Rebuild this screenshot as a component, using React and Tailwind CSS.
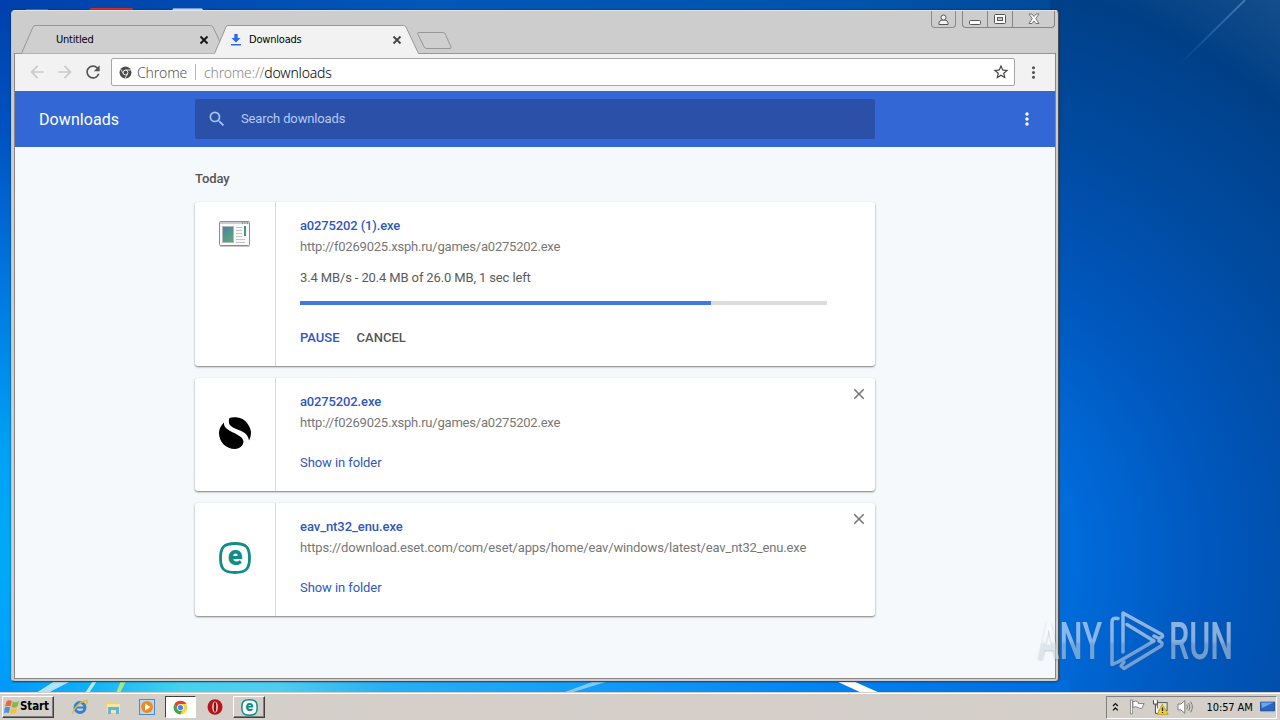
import React from 'react';
import { MdSearch, MdRefresh, MdStarBorder, MdMoreVert, MdClose, MdArrowBack, MdArrowForward } from 'react-icons/md';

const downloads = [
  {
    id: 1,
    name: 'a0275202 (1).exe',
    nameTracking: 'tracking-[-0.14px]',
    url: 'http://f0269025.xsph.ru/games/a0275202.exe',
    urlTracking: 'tracking-[-0.21px]',
    status: '3.4 MB/s - 20.4 MB of 26.0 MB, 1 sec left',
    percent: 78,
    icon: 'app',
  },
  {
    id: 2,
    name: 'a0275202.exe',
    nameTracking: 'tracking-[-0.14px]',
    url: 'http://f0269025.xsph.ru/games/a0275202.exe',
    urlTracking: 'tracking-[-0.21px]',
    icon: 'swirl',
  },
  {
    id: 3,
    name: 'eav_nt32_enu.exe',
    nameTracking: 'tracking-[-0.06px]',
    url: 'https://download.eset.com/com/eset/apps/home/eav/windows/latest/eav_nt32_enu.exe',
    urlTracking: 'tracking-[-0.135px]',
    icon: 'eset',
  },
];

const AppIcon = () => (
  <svg width="32" height="32" viewBox="0 0 32 32">
    <defs>
      <linearGradient id="appPic" x1="0" y1="0" x2="0.6" y2="1">
        <stop offset="0" stopColor="#4a80a8" />
        <stop offset="1" stopColor="#58a878" />
      </linearGradient>
    </defs>
    <rect x="0.5" y="3.5" width="30" height="24" rx="1" fill="#fafafa" stroke="#8b8b8b" />
    <rect x="1" y="4" width="29" height="2" fill="#c9ccd0" />
    <path d="M23 5h1M25.5 5h1M28 5h1" stroke="#555" />
    <rect x="3.5" y="8.500" width="11" height="16" fill="url(#appPic)" stroke="#b4b8bc" />
    <path d="M17 9.5h6M17 12.5h6M17 15.5h6M17 18.5h6M17 21.5h9M17 24.5h9" stroke="#c4c4c4" />
    <rect x="25" y="8" width="2" height="10" fill="#4f8d88" />
    <path d="M1 28.5h30" stroke="#c8c8c8" />
  </svg>
);

const SwirlIcon = () => (
  <svg width="32" height="32" viewBox="0 0 32 32">
    <path d="M10.5 1C13 0 16 0 19 .6C26 2 31 8 32 15C32 19 31 22 30 23.500C29 18 26 15.500 21 13.500C16 11.500 11 10 10 6C9.700 4 10 2 10.500 1Z" />
    <path d="M5 5.500C4.500 10 8 12.500 13 15C19 18 24 20 24.500 24.500C24.500 28 21 32 16 32C7 32 0 25 0 16C0 12 2 8 5 5.500Z" />
  </svg>
);

const EsetIcon = ({ size = 32 }) => (
  <svg width={size} height={size} viewBox="0 0 32 32">
    <path d="M16 1.500C27 1.500 30.500 5 30.500 16S27 30.500 16 30.500S1.500 27 1.500 16S5 1.500 16 1.500Z" fill="#fff" stroke="#0f8c8c" strokeWidth="2.800" />
    <text x="16" y="23" textAnchor="middle" fontFamily="Roboto" fontSize="27" fontWeight="900" fill="#0f8c8c">e</text>
  </svg>
);

const ChromeIcon = ({ size = 18 }) => (
  <svg width={size} height={size} viewBox="0 0 24 24">
    <circle cx="12" cy="12" r="11" fill="#fbd13c" />
    <path d="M2.500 6.500A11 11 0 0 1 21.500 6.500H12A5.500 5.500 0 0 0 7.200 14.700Z" fill="#df4433" />
    <path d="M2.500 6.500L7.200 14.700A5.500 5.500 0 0 0 15 16.500L11.500 23A11 11 0 0 1 2.500 6.500Z" fill="#3aa757" />
    <circle cx="12" cy="12" r="5.300" fill="#fff" />
    <circle cx="12" cy="12" r="4.200" fill="#4285f4" />
  </svg>
);

const getIcon = (icon) => {
  switch (icon) {
    case 'app': return <AppIcon />;
    case 'swirl': return <SwirlIcon />;
    default: return <EsetIcon />;
  }
};

const Wallpaper = () => (
  <svg className="absolute inset-0" width="1280" height="720" viewBox="0 0 1280 720">
    <defs>
      <linearGradient id="left" x1="0" y1="0" x2="0" y2="1">
        <stop offset="0" stopColor="#0040ac" />
        <stop offset="0.18" stopColor="#0052c0" />
        <stop offset="0.4" stopColor="#0078e0" />
        <stop offset="0.62" stopColor="#00a0f4" />
        <stop offset="0.78" stopColor="#00aaf8" />
        <stop offset="1" stopColor="#0098fc" />
      </linearGradient>
      <linearGradient id="top" x1="0" y1="0" x2="1" y2="0">
        <stop offset="0" stopColor="#0040ac" />
        <stop offset="0.4" stopColor="#0058b8" />
        <stop offset="0.8" stopColor="#0054ac" />
        <stop offset="1" stopColor="#004a9a" />
      </linearGradient>
      <radialGradient id="right" gradientUnits="userSpaceOnUse" cx="900" cy="560" r="680">
        <stop offset="0.25" stopColor="#006cdc" />
        <stop offset="0.45" stopColor="#0058be" />
        <stop offset="0.57" stopColor="#0050ae" />
        <stop offset="0.68" stopColor="#004a9e" />
        <stop offset="0.79" stopColor="#004492" />
        <stop offset="0.87" stopColor="#003f86" />
        <stop offset="1" stopColor="#164e8a" />
      </radialGradient>
      <linearGradient id="bottom" x1="0" y1="0" x2="1" y2="0">
        <stop offset="0" stopColor="#0098fc" />
        <stop offset="0.08" stopColor="#10b0f8" />
        <stop offset="0.17" stopColor="#45d2ee" />
        <stop offset="0.26" stopColor="#50ccf0" />
        <stop offset="0.36" stopColor="#28b0f4" />
        <stop offset="0.55" stopColor="#149cf8" />
        <stop offset="0.8" stopColor="#0080f0" />
        <stop offset="1" stopColor="#006cdc" />
      </linearGradient>
      <linearGradient id="streak" x1="0" y1="1" x2="1" y2="0">
        <stop offset="0" stopColor="#6ea4d4" stopOpacity="0" />
        <stop offset="1" stopColor="#6ea4d4" stopOpacity="0.55" />
      </linearGradient>
    </defs>
    <rect width="1280" height="720" fill="url(#left)" />
    <rect width="1058" height="12" fill="url(#top)" />
    <rect x="1050" width="230" height="720" fill="url(#right)" />
    <rect y="680" width="1070" height="14" fill="url(#bottom)" />
    <path d="M1180 64L1245 0" stroke="url(#streak)" strokeWidth="1.800" />
    <path d="M55 681h16L48 693H36Z" fill="#c5eafc" opacity="0.9" />
    <path d="M93 681h4L89 693h-4Z" fill="#b5ecfa" />
    <path d="M121 681h5L120 693h-4Z" fill="#a8e888" />
    <path d="M595 681h14L570 693h-8Z" fill="#7ccdfc" />
    <path d="M836 681h17L880 693H862Z" fill="#fff" />
    <rect x="26" y="9" width="22" height="2" fill="#8497c8" opacity="0.6" />
    <path d="M91 8h41l2 3H88Z" fill="#dd2c2a" />
    <path d="M173 8.500h29l2 2.500H172Z" fill="#eef4f6" />
  </svg>
);

const Tab = ({ title, active, icon }) => (
  <div className={`relative flex h-[29px] w-[205px] items-center pl-[35px] ${active ? 'z-10 -ml-3' : ''}`}>
    <svg className="absolute left-0 top-0" width="205" height="29" viewBox="0 0 205 29">
      <path d="M0.500 28.500L12 2Q12.700 .5 14 .5H189.500Q191 .5 192 2L204.500 28.500" fill={active ? '#f2f2f2' : '#cfcfcf'} stroke="#979797" />
      {active && <path d="M1 28.500H204" stroke="#f2f2f2" />}
    </svg>
    {icon}
    <span className="relative font-['DejaVu_Sans_Condensed','DejaVu_Sans',sans-serif] text-[11px] leading-none tracking-[-0.2px] text-black">{title}</span>
    <svg className="absolute right-[17px] top-[10px]" width="10" height="10" viewBox="0 0 10 10">
      <path d="M1.500 1.500L8.500 8.500M8.500 1.500L1.500 8.500" stroke={active ? '#444' : '#111'} strokeWidth="1.800" />
    </svg>
  </div>
);

const WindowControls = () => (
  <div className="mr-px flex h-[17px] items-start gap-1.5">
    <div className="flex h-[17px] w-[25px] items-center justify-center rounded-b border border-t-0 border-[#8c8c8c]">
      <svg width="11" height="11" viewBox="0 0 11 11" fill="#f4f4f4" stroke="#555">
        <path d="M1 10.500V8.500Q1.500 6.500 4 6H7Q9.500 6.500 10 8.500V10.500Z" />
        <circle cx="5.500" cy="3.500" r="2.500" />
      </svg>
    </div>
    <div className="flex h-[17px] w-[93px] rounded-b border border-t-0 border-[#858585]">
      <div className="flex w-[25px] items-center justify-center border-r border-[#858585]">
        <svg width="12" height="12" viewBox="0 0 12 12">
          <rect x="0.500" y="7.500" width="11" height="4" rx="1" fill="#fafafa" stroke="#555" />
        </svg>
      </div>
      <div className="flex w-[25px] items-center justify-center border-r border-[#858585]">
        <svg width="12" height="11" viewBox="0 0 12 11" fill="#fafafa" stroke="#555">
          <rect x="0.500" y="0.500" width="11" height="9" rx="1" />
          <rect x="3.500" y="3.500" width="5" height="3" fill="#ccc" />
        </svg>
      </div>
      <div className="flex flex-1 items-center justify-center">
        <svg width="12" height="12" viewBox="0 0 12 12">
          <path d="M1 1H4L6 3.500L8 1H11L7.800 5.700L11 10.500H8L6 8L4 10.500H1L4.200 5.700Z" fill="#fafafa" stroke="#666" strokeWidth="0.900" />
        </svg>
      </div>
    </div>
  </div>
);

const TabStrip = () => (
  <div className="flex h-[43px] justify-between">
    <div className="flex items-end pl-[7px]">
      <Tab title="Untitled" />
      <Tab
        title="Downloads"
        active
        icon={
          <svg className="absolute left-[17px] top-[9px]" width="10" height="12" viewBox="0 0 10 12" fill="#2f6bea">
            <path d="M3.300 0H6.700V4H9.500L5 8.500L.5 4H3.300ZM0 10H10V11.500H0Z" />
          </svg>
        }
      />
      <svg className="mb-1 -ml-0.5" width="36" height="18" viewBox="0 0 36 18">
        <path d="M1.500 .5H26Q27.500 .5 28.300 2L34 15Q34.500 16.500 33 16.500H10Q8 16.500 7.200 15L.8 2Q.3 .5 1.500 .5Z" fill="#cfcfcf" stroke="#979797" />
      </svg>
    </div>
    <WindowControls />
  </div>
);

const Toolbar = () => (
  <div className="flex h-[38px] items-center border-t border-[#979797] bg-[#f2f2f2] pb-px pl-3">
    <MdArrowBack className="h-5 w-5 text-[#cacaca]" />
    <MdArrowForward className="ml-2 h-5 w-5 text-[#cacaca]" />
    <MdRefresh className="ml-2 h-5 w-5 text-[#555]" />
    <div className="ml-2 flex h-7 w-[904px] items-center rounded-[2px] border border-[#a6a6a6] bg-white pl-[7px] pr-1 font-['Noto_Sans','Open_Sans',sans-serif] text-[14px] font-light">
      <svg width="13" height="13" viewBox="0 0 13 13">
        <circle cx="6.500" cy="6.500" r="6" fill="#4c4c4c" />
        <circle cx="6.500" cy="6.500" r="2.400" fill="none" stroke="#fff" strokeWidth="0.900" />
        <path d="M6.500 4H12M4.300 7.700L1.600 3M8.700 7.700L6 12.400" stroke="#fff" strokeWidth="0.800" />
      </svg>
      <span className="ml-[5px] w-[50px] whitespace-nowrap tracking-[-0.1px] text-[#555]">Chrome</span>
      <span className="ml-2 h-4 w-px bg-[#b5b5b5]" />
      <span className="ml-2 flex-1 whitespace-nowrap tracking-[-0.18px] text-[#888]">chrome://<span className="text-black">downloads</span></span>
      <MdStarBorder className="h-[18px] w-[18px] text-[#444]" />
    </div>
    <MdMoreVert className="ml-[9px] h-[19px] w-[19px] text-[#555]" />
  </div>
);

const PageHeader = () => (
  <div className="flex h-14 items-center bg-[#3367d6]">
    <h1 className="w-[180px] pl-6 pt-0.5 text-[16px] tracking-[0.08px] text-white">Downloads</h1>
    <div className="flex h-10 w-[680px] items-center rounded-[2px] bg-[#2a51a7] pl-3">
      <MdSearch className="h-5 w-5 text-[#a9c3f4]" />
      <span className="ml-3.5 text-[13px] tracking-[-0.14px] text-[#b4caf4]">Search downloads</span>
    </div>
    <div className="flex flex-1 justify-end pr-[18px]">
      <MdMoreVert className="h-5 w-5 text-white" />
    </div>
  </div>
);

const DownloadCard = ({ item }) => {
  const inProgress = item.percent !== undefined;

  return (
    <div className={`relative flex rounded-[3px] bg-white shadow-[0_1px_2px_rgba(0,0,0,0.5)] ${inProgress ? 'h-[164px]' : 'h-[113px]'}`}>
      <div className={`flex w-[81px] justify-center border-r border-[#d8d8d8] ${inProgress ? 'items-start pt-4' : 'items-center pb-[3px]'}`}>
        {getIcon(item.icon)}
      </div>
      <div className="flex-1 pl-6 pr-12 pt-3.5 text-[13px]">
        <p className={`h-5 font-medium leading-5 text-[#3158b8] ${item.nameTracking}`}>{item.name}</p>
        <p className={`mt-px h-5 whitespace-nowrap leading-5 text-[#777] ${item.urlTracking}`}>{item.url}</p>
        {inProgress ? (
          <>
            <p className="mt-[11px] h-5 leading-5 tracking-[-0.13px] text-[#5a5a5a]">{item.status}</p>
            <div className="mt-[13px] h-1 bg-[#dcdcdc]">
              <div className="h-1 bg-[#3f78e0]" style={{ width: `${item.percent}%` }} />
            </div>
            <div className="mt-[23px] flex gap-[17px] font-medium leading-5">
              <span className="text-[#3158b8]">PAUSE</span>
              <span className="text-[#555]">CANCEL</span>
            </div>
          </>
        ) : (
          <p className="mt-5 h-5 leading-5 tracking-[-0.08px] text-[#3158b8]">Show in folder</p>
        )}
      </div>
      {!inProgress && <MdClose className="absolute right-[7px] top-[7px] h-[18px] w-[18px] text-[#757575]" />}
    </div>
  );
};

const BrowserWindow = () => (
  <div className="absolute left-[11px] top-[10px] flex h-[672px] w-[1048px] flex-col rounded-t-[4px] rounded-b-[4px] border border-b-[#454545] border-l-[#c4c4c4] border-r-[#4c4c4c] border-t-[#e4e4e4] bg-[#cdcdcd] px-0.5 pb-0.5 shadow-[0_0_2px_rgba(0,0,0,0.5)]">
    <TabStrip />
    <div className="-mt-px flex flex-1 flex-col border-x border-b border-[#8b8683] bg-white">
      <Toolbar />
      <div className="flex flex-1 flex-col bg-[#f6f9fc] font-[Roboto,sans-serif]">
        <PageHeader />
        <div className="mx-auto w-[680px]">
          <h2 className="mb-[13px] mt-[22px] h-5 text-[13px] font-medium leading-5 tracking-[-0.1px] text-[#555]">Today</h2>
          <div className="flex flex-col gap-3">
            {downloads.map((item) => (
              <DownloadCard key={item.id} item={item} />
            ))}
          </div>
        </div>
      </div>
    </div>
  </div>
);

const Watermark = () => (
  <svg className="absolute left-[1030px] top-[600px]" width="250" height="80" viewBox="0 0 250 80">
    <defs>
      <linearGradient id="mark" gradientUnits="userSpaceOnUse" x1="0" y1="12" x2="0" y2="70">
        <stop offset="0" stopColor="#fff" />
        <stop offset="0.5" stopColor="#f4f6fa" />
        <stop offset="0.56" stopColor="#cdd6e2" />
        <stop offset="1" stopColor="#cdd6e2" />
      </linearGradient>
    </defs>
    <g fontFamily="Roboto" fontWeight="500" fontSize="52" fill="url(#mark)" opacity="0.55" style={{ filter: 'drop-shadow(0 1px 1px rgba(60,70,90,0.5))' }}>
      <text x="8" y="59" textLength="64" lengthAdjust="spacingAndGlyphs">ANY</text>
      <text x="139" y="59" textLength="64" lengthAdjust="spacingAndGlyphs">RUN</text>
      <g fill="none" stroke="url(#mark)" strokeWidth="3.500" strokeLinejoin="round" strokeLinecap="round">
        <path d="M88 18.500Q82 17 82 22V64.500L88 62L124 41L97 24.500" />
        <path d="M93 52V13L132 34.500Q134 37 129 38.500L124 36" />
        <path d="M129 41Q134 43 131 46L94 68.500L91 66L94 62" />
      </g>
    </g>
  </svg>
);

const StartButton = () => (
  <div className="flex h-[22px] w-[52px] items-center border border-b-[#404040] border-l-white border-r-[#404040] border-t-white bg-[#d4d0c8] pl-px shadow-[inset_-1px_-1px_#808080]">
    <svg width="16" height="16" viewBox="0 0 16 16">
      <path d="M2.500 2.500Q5 .5 7.800 2L6.500 7.500Q3.800 6 1 7.800Z" fill="#e8683a" />
      <path d="M8.800 2.600Q11.500 4 15 2L13.500 7.600Q10.500 9.500 7.500 8Z" fill="#82b94a" />
      <path d="M.8 8.800Q3.500 7 6.200 8.500L4.800 14Q2.500 12.800 0 14Z" fill="#4b93d8" />
      <path d="M7.200 9Q10 10.500 13.200 8.600L12 13.800Q8.800 15.500 5.800 14.200Z" fill="#f3c23c" />
    </svg>
    <span className="font-['DejaVu_Sans_Condensed','DejaVu_Sans',sans-serif] text-[11.500px] font-bold leading-none tracking-[-0.1px] text-black">Start</span>
  </div>
);

const Taskbar = () => (
  <div className="absolute bottom-0 left-0 flex h-7 w-full items-center border-t border-[#d4d0c8] bg-[#d4cfc8] pl-0.5 pt-px shadow-[inset_0_1px_#fff]">
    <StartButton />
    <svg className="ml-[18px]" width="16" height="16" viewBox="0 0 16 16">
      <circle cx="8" cy="8.500" r="5" fill="none" stroke="#2b83d6" strokeWidth="3" />
      <path d="M4 8.500H14" stroke="#2b83d6" strokeWidth="2" />
      <path d="M1 15C0 11 8 2 15 1.500C15.500 3 14.500 5 14 5.500" fill="none" stroke="#e3b93c" strokeWidth="1.300" />
    </svg>
    <svg className="ml-[17px]" width="16" height="16" viewBox="0 0 16 16">
      <path d="M1 2H6L7 3.500H14V13H1Z" fill="#ecd27a" />
      <path d="M2 5H15V14H2Z" fill="#f8e7a4" />
      <path d="M3 8H14V15H11V11H6V15H3Z" fill="#62b4e0" />
    </svg>
    <svg className="ml-[18px]" width="16" height="16" viewBox="0 0 16 16">
      <rect x="0.500" y="0.500" width="15" height="15" fill="#b9d8f4" stroke="#4888cc" />
      <circle cx="8" cy="8" r="6" fill="#f18a1c" />
      <path d="M6 4.500L11.500 8L6 11.500Z" fill="#fff" />
    </svg>
    <div className="ml-2.5 flex h-[22px] w-[31px] items-center justify-center border border-b-white border-l-[#404040] border-r-white border-t-[#404040] bg-white">
      <ChromeIcon size={15} />
    </div>
    <svg className="ml-[11px]" width="16" height="16" viewBox="0 0 16 16">
      <ellipse cx="8" cy="8" rx="7.500" ry="7.800" fill="#b8141b" />
      <ellipse cx="8" cy="8" rx="2.800" ry="5.500" fill="#f6dede" />
      <ellipse cx="8" cy="8" rx="1.300" ry="5" fill="#8c1015" />
    </svg>
    <div className="ml-2.5 flex h-[22px] w-8 items-center justify-center border border-b-[#404040] border-l-white border-r-[#404040] border-t-white shadow-[inset_-1px_-1px_#808080]">
      <EsetIcon size={17} />
    </div>
    <div className="ml-auto mr-[3px] flex h-[23px] w-[171px] items-center border border-b-white border-l-[#808080] border-r-white border-t-[#808080] pl-[5px]">
      <svg width="7" height="10" viewBox="0 0 7 10" fill="none" stroke="#111" strokeWidth="1.300">
        <path d="M1 4L3.500 1.500L6 4M1 8.500L3.500 6L6 8.500" />
      </svg>
      <svg className="ml-2.5" width="17" height="16" viewBox="0 0 17 16">
        <path d="M1.500 .8H3.500V15H1.500Z" fill="#fff" stroke="#777" strokeWidth="0.800" />
        <path d="M4 2.500Q7 1 9.500 3V4.500H15.500L13 9.500Q11 10 9.500 8.500Q7 7 4 8.500Z" fill="#fdfdfd" stroke="#777" strokeWidth="0.900" />
      </svg>
      <svg className="ml-[7px]" width="17" height="16" viewBox="0 0 17 16">
        <rect x="5.500" y="3.500" width="10" height="8" fill="#e4e4e4" stroke="#555" />
        <path d="M1.500 1V5H5.500V1M3.500 5V14.500H8" fill="#fff" stroke="#444" />
        <path d="M10.500 5L16.500 15.500H5.500Z" fill="#f6d21c" stroke="#b08a00" strokeWidth="0.700" />
        <path d="M10.800 8.500V12M10.800 13V14.200" stroke="#222" strokeWidth="1.300" />
      </svg>
      <svg className="ml-2" width="18" height="16" viewBox="0 0 18 16" fill="none" stroke="#777">
        <path d="M1 5H4L8 1.500V14.500L4 11H1Z" fill="#fff" />
        <path d="M10 5.500Q11.500 8 10 10.500M12 4Q14.500 8 12 12M14 2.500Q17.500 8 14 13.500" />
      </svg>
      <span className="ml-3 w-[48px] whitespace-nowrap font-['DejaVu_Sans_Condensed','DejaVu_Sans',sans-serif] text-[11px] leading-none tracking-[-0.1px] text-black">10:57 AM</span>
      <svg className="ml-[7px]" width="16" height="14" viewBox="0 0 16 14">
        <path d="M.5 2H15V11H.5Z" fill="#2767c4" stroke="#1a3f88" strokeWidth="0.800" />
        <path d="M1 2.500H14L2 8Z" fill="#6ca4e8" />
        <path d="M5 12.500H15" stroke="#c0c8d4" />
      </svg>
    </div>
  </div>
);

const App = () => (
  <div className="relative h-[720px] w-[1280px] overflow-hidden">
    <Wallpaper />
    <BrowserWindow />
    <Watermark />
    <Taskbar />
  </div>
);

export default App;
